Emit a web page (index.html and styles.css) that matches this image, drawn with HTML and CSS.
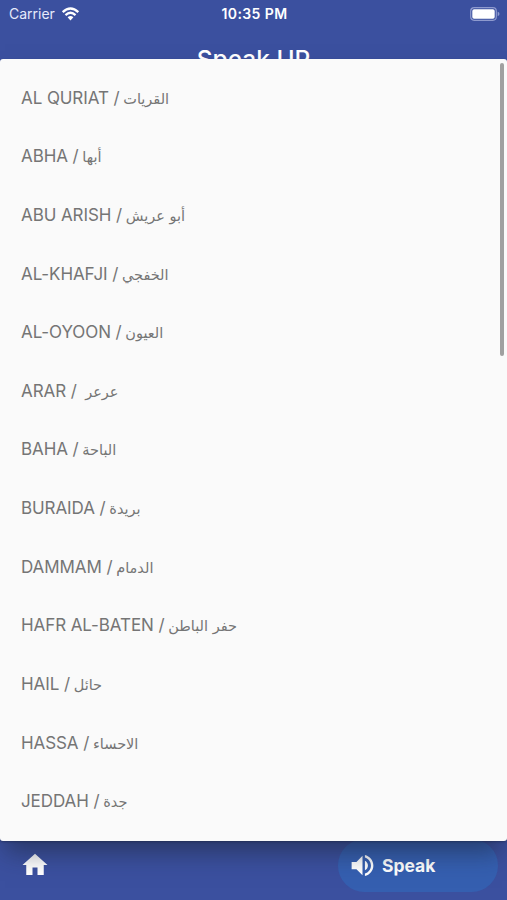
FILE: index.html
```
<!DOCTYPE html>
<html lang="en">
<head>
  <meta charset="UTF-8">
  <meta name="viewport" content="width=device-width, initial-scale=1">
  <title>Speak UP</title>
  <link rel="stylesheet" href="styles.css">
</head>
<body>

<div class="status-bar">
  <div class="carrier">
    <span>Carrier</span>
    <svg class="wifi" viewBox="0 0 18 14">
      <path d="M1.200 5.100Q9-2.200 16.800 5.100M4 8.100Q9 3.300 14 8.100" fill="none" stroke="#fff" stroke-width="2.300"/>
      <path d="M6.100 10.200Q9 7.600 11.900 10.200L9 13.400z" fill="#fff"/>
    </svg>
  </div>
  <span class="time">10:35 PM</span>
  <svg class="battery" viewBox="0 0 30 14">
    <rect x=".7" y=".7" width="25.600" height="12.600" rx="3.500" fill="none" stroke="#8e9ace" stroke-width="1.200"/>
    <rect x="2.300" y="2.300" width="22.400" height="9.400" rx="1.800" fill="#fff"/>
    <path d="M27.700 4.800q1.800.6 1.800 2.200t-1.800 2.200z" fill="#8e9ace"/>
  </svg>
</div>

<h1 class="title">Speak UP</h1>

<div class="menu">
  <ul class="cities">
    <li>AL QURIAT / <span lang="ar">القريات</span></li>
    <li>ABHA / <span lang="ar">أبها</span></li>
    <li>ABU ARISH / <span lang="ar">أبو عريش</span></li>
    <li>AL-KHAFJI / <span lang="ar">الخفجي</span></li>
    <li>AL-OYOON / <span lang="ar">العيون</span></li>
    <li>ARAR / &nbsp;<span lang="ar">عرعر</span></li>
    <li>BAHA / <span lang="ar">الباحة</span></li>
    <li>BURAIDA / <span lang="ar">بريدة</span></li>
    <li>DAMMAM / <span lang="ar">الدمام</span></li>
    <li>HAFR AL-BATEN / <span lang="ar">حفر الباطن</span></li>
    <li>HAIL / <span lang="ar">حائل</span></li>
    <li>HASSA / <span lang="ar">الاحساء</span></li>
    <li>JEDDAH / <span lang="ar">جدة</span></li>
  </ul>
  <div class="scrollbar"></div>
</div>

<div class="bottom-bar">
  <svg class="home" viewBox="0 0 24 24"><path d="M10 20v-6h4v6h5v-8h3L12 3 2 12h3v8z"/></svg>
  <div class="speak-btn">
    <svg class="volume" viewBox="0 0 24 24"><path d="M3 9v6h4l5 5V4L7 9H3zm13.500 3c0-1.770-1.020-3.290-2.500-4.030v8.050c1.480-.73 2.500-2.250 2.500-4.020zM14 3.230v2.060c2.890.86 5 3.540 5 6.710s-2.110 5.850-5 6.710v2.060c4.010-.91 7-4.490 7-8.770s-2.990-7.860-7-8.770z"/></svg>
    <span>Speak</span>
  </div>
</div>

</body>
</html>
```
FILE: styles.css
```
* {
  box-sizing: border-box;
}
body {
  margin: 0;
  height: 900px;
  overflow: hidden;
  background: #3b509f;
  color: #fff;
  font-family: Inter, "Liberation Sans", sans-serif;
  display: flex;
  flex-direction: column;
}
.status-bar {
  height: 27px;
  flex: none;
  display: grid;
  grid-template-columns: 1fr auto 1fr;
  align-items: center;
  padding: 0 7px 0 9px;
  font-size: 14px;
}
.carrier {
  display: flex;
  align-items: center;
  gap: 6px;
  color: #e6eafb;
}
.wifi {
  width: 19px;
  height: 14px;
}
.time {
  font-weight: 600;
  font-size: 14px;
  letter-spacing: 0.4px;
}
.battery {
  width: 30px;
  height: 14px;
  justify-self: end;
}
.title {
  margin: 0;
  height: 32.400px;
  flex: none;
  padding-top: 17px;
  text-align: center;
  font-size: 24.500px;
  line-height: 30px;
  font-weight: 500;
}
.menu {
  position: relative;
  z-index: 1;
  flex: none;
  height: 782px;
  padding-top: 9.200px;
  background: #fafafa;
  border-radius: 3px;
  box-shadow: 0 16px 24px -5px rgba(24, 32, 50, 0.52), 0 1px 2px rgba(20, 28, 60, 0.4);
}
.cities {
  list-style: none;
  margin: 0;
  padding: 0 21px;
  color: #757575;
  font-size: 17px;
  letter-spacing: -0.08px;
}
.cities li {
  height: 58.650px;
  line-height: 58.650px;
  white-space: nowrap;
}
.cities span {
  font-family: "DejaVu Sans", sans-serif;
  font-size: 14.500px;
  letter-spacing: 0;
  margin-left: -1px;
}
.scrollbar {
  position: absolute;
  top: 4px;
  right: 3px;
  width: 4px;
  height: 293px;
  border-radius: 2px;
  background: #a0a0a0;
}
.bottom-bar {
  flex: 1;
  display: flex;
  align-items: center;
  justify-content: space-between;
  padding: 0 9px 6px 20px;
  margin-top: -5px;
}
.home {
  width: 30px;
  height: 30px;
  fill: #fff;
}
.speak-btn {
  width: 160px;
  height: 53px;
  display: flex;
  align-items: center;
  gap: 5px;
  padding-left: 10px;
  border-radius: 27px;
  background: #355fb0;
  color: #fff;
  font-size: 17.500px;
  font-weight: 700;
}
.volume {
  width: 29px;
  height: 29px;
  fill: #fff;
}
```
